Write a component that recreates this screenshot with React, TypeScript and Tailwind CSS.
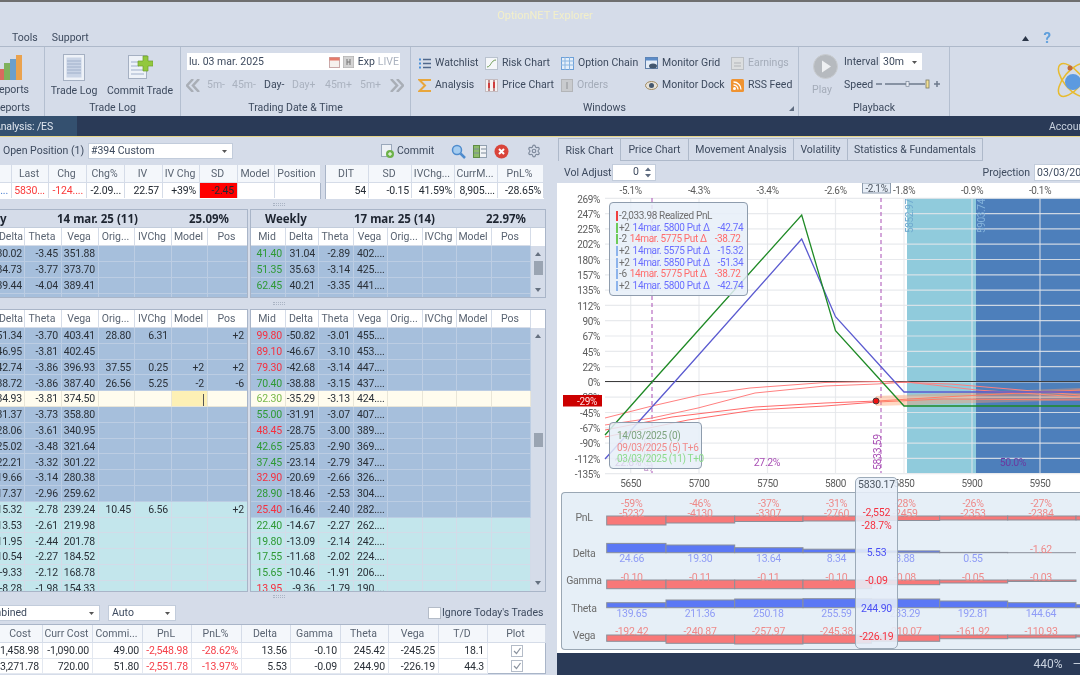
import React from "react";
import { Settings } from "lucide-react";

const TitleBar = () => (
  <div className="h-[26px] bg-[#d5dce9] flex items-center justify-center text-[11px] text-[#f3efc9]">
    <span className="ml-[10px]">OptionNET Explorer</span>
  </div>
);

const MenuBar = () => (
  <div className="h-[18px] bg-[#d5dce9] flex items-center text-[#3d4a5e] pl-[12px] pt-[2px]">
    <span>Tools</span>
    <span className="ml-[14px]">Support</span>
    <div className="ml-auto mr-[29px] flex items-center gap-[15px]">
      <svg width="7" height="5" viewBox="0 0 7 5"><path d="M0 5 L3.5 0 L7 5Z" fill="#2b3648" /></svg>
      <span className="text-[#5f9fdc] text-[15px] font-bold leading-none">?</span>
    </div>
  </div>
);

const Ico = ({ children, w = 13, h = 13, vb }: { children: React.ReactNode; w?: number; h?: number; vb?: string }) => (
  <svg width={w} height={h} viewBox={vb ?? `0 0 ${w} ${h}`} className="shrink-0">{children}</svg>
);

const WinItem = ({ icon, label, dim }: { icon: React.ReactNode; label: string; dim?: boolean }) => (
  <div className={`flex items-center gap-[4px] whitespace-nowrap ${dim ? "text-[#a4acb9]" : "text-[#3d4a5e]"}`}>
    {icon}
    <span>{label}</span>
  </div>
);

const Group = ({ w, label, children, last }: { w: string; label: string; children: React.ReactNode; last?: boolean }) => (
  <div className={`${w} shrink-0 flex flex-col overflow-hidden ${last ? "" : "border-r border-[#b4bfd0]"}`}>
    <div className="flex-1 min-h-0">{children}</div>
    <div className="h-[17px] pt-[2px] flex items-center justify-center text-[#3d4a5e] whitespace-nowrap">{label}</div>
  </div>
);

const Ribbon = () => (
  <div className="h-[70px] bg-[#d5dce9] border-t border-[#aeb9ca] flex">
    <div className="w-[45px] shrink-0 flex flex-col overflow-hidden border-r border-[#b4bfd0]">
      <div className="flex-1 flex flex-col items-end pr-[15px]">
        <svg width="26" height="27" viewBox="0 0 26 27" className="mt-[7px] mr-[5px] shrink-0">
          <rect x="0" y="15" width="6" height="11" fill="#d96a5e" />
          <rect x="6" y="9" width="6" height="17" fill="#7fb15c" />
          <rect x="12" y="5" width="6" height="21" fill="#6c9fcc" />
          <rect x="18" y="1" width="6" height="25" fill="#eaa24e" />
        </svg>
        <span className="text-[#3d4a5e] mt-[4px] whitespace-nowrap">Reports</span>
      </div>
      <div className="h-[17px] pt-[2px] flex items-center justify-end pr-[14px] text-[#3d4a5e] whitespace-nowrap">Reports</div>
    </div>
    <Group w="w-[136px]" label="Trade Log">
      <div className="flex pl-[1px] pt-[7px] text-[#3d4a5e]">
        <div className="w-[56px] flex flex-col items-center">
          <svg width="22" height="27" viewBox="0 0 22 27">
            <rect x="0.5" y="0.5" width="21" height="26" fill="#eef2f8" stroke="#a5b0c2" />
            <rect x="3.5" y="3.5" width="15" height="20" fill="#c9d4e6" />
            <path d="M4 7h14M4 10h14M4 13h14M4 16h14M4 19h14" stroke="#a0b0ca" />
          </svg>
          <span className="mt-[5px] whitespace-nowrap">Trade Log</span>
        </div>
        <div className="w-[70px] ml-[3px] flex flex-col items-center">
          <svg width="25" height="27" viewBox="0 0 25 27">
            <rect x="0.5" y="1.5" width="18" height="23" fill="#eef2f8" stroke="#a5b0c2" />
            <path d="M3 8h13M3 12h8M3 16h13M3 20h13" stroke="#a0b0ca" />
            <path d="M15 2h5v5h5v5h-5v5h-5v-5h-5V7h5z" fill="#92c83e" stroke="#6f9f2d" strokeWidth="0.7" />
          </svg>
          <span className="mt-[5px] whitespace-nowrap">Commit Trade</span>
        </div>
      </div>
    </Group>
    <Group w="w-[230px]" label="Trading Date & Time">
      <div className="pl-[6px] pt-[6px]">
        <div className="w-[213px] h-[17px] pt-[1px] bg-white flex items-center pl-[2px] text-[#3d4a5e]">
          <span>lu. 03 mar. 2025</span>
          <svg width="11" height="11" viewBox="0 0 11 11" className="ml-auto">
            <rect x="0.5" y="0.5" width="10" height="10" fill="#f6f1ee" stroke="#c9a9a9" />
            <rect x="0.5" y="0.5" width="10" height="3" fill="#e57b6a" />
          </svg>
          <svg width="11" height="12" viewBox="0 0 11 12" className="ml-[3px]">
            <rect width="11" height="12" fill="#d3d3d3" stroke="#aaa" />
            <path d="M4 3v6M7 3v6M4 6h3" stroke="#777" />
          </svg>
          <span className="ml-[4px]">Exp</span>
          <span className="ml-[3px] mr-[1px] text-[#aab2bf]">LIVE</span>
        </div>
        <div className="mt-[6px] ml-[-1px] h-[18px] pt-[1px] grid grid-cols-[21px_25px_32px_28px_33px_35px_30px_13px] items-center whitespace-nowrap text-[#aab2bf]">
          <svg width="14" height="13" viewBox="0 0 14 13"><path d="M7 0L1 6.5L7 13M13 0L7 6.5L13 13" fill="none" stroke="#a9aeb6" strokeWidth="2.5" /></svg>
          <span>5m-</span>
          <span>45m-</span>
          <span className="text-[#3d4a5e]">Day-</span>
          <span>Day+</span>
          <span>45m+</span>
          <span>5m+</span>
          <svg width="14" height="13" viewBox="0 0 14 13"><path d="M1 0L7 6.5L1 13M7 0L13 6.5L7 13" fill="none" stroke="#a9aeb6" strokeWidth="2.5" /></svg>
        </div>
      </div>
    </Group>
    <div className="w-[388px] shrink-0 flex flex-col border-r border-[#b4bfd0] overflow-hidden">
      <div className="flex-1 pl-[7px] pt-[5px] grid grid-cols-[67px_76px_84px_86px_1fr] grid-rows-[22px_22px]">
        <WinItem label="Watchlist" icon={<Ico><path d="M5 2.5h8M5 6.5h8M5 10.5h8" stroke="#50688c" strokeWidth="1.3" /><path d="M1 2.5h2M1 6.5h2M1 10.5h2" stroke="#4a90d8" strokeWidth="2" /></Ico>} />
        <WinItem label="Risk Chart" icon={<Ico><rect x="0.5" y="0.5" width="12" height="12" fill="#f5f7fa" stroke="#b9c2ce" /><path d="M2 10C6 10 6 3 11 3" fill="none" stroke="#6c9a52" /></Ico>} />
        <WinItem label="Option Chain" icon={<Ico><rect x="0.5" y="0.5" width="12" height="12" fill="#e5effa" stroke="#6da0d8" /><path d="M0 4h13M0 8h13M4 0v13M8.500 0v13" stroke="#8ab6e2" /></Ico>} />
        <WinItem label="Monitor Grid" icon={<Ico><rect x="0.5" y="0.5" width="12" height="11" fill="#e3ecf7" stroke="#5f7fa8" /><rect x="0.500" y="0.500" width="12" height="3" fill="#5c8cc8" /><ellipse cx="8" cy="9" rx="4" ry="2.5" fill="#44586f" /></Ico>} />
        <WinItem dim label="Earnings" icon={<Ico><rect x="0.5" y="0.5" width="12" height="12" fill="#dcdedf" stroke="#bbbfc4" /><path d="M3 6h7M3 9h7" stroke="#b2b5b9" /></Ico>} />
        <WinItem label="Analysis" icon={<Ico><path d="M12 2V1H1.500L7 6.500L1.500 12H12v-1" fill="none" stroke="#e8a63c" strokeWidth="2" /></Ico>} />
        <WinItem label="Price Chart" icon={<Ico><rect x="0.5" y="0.5" width="12" height="12" fill="#f6f2f2" stroke="#c5bcc0" /><path d="M4 1v11M9 1v11" stroke="#8b2e2e" /><rect x="3" y="4" width="2" height="5" fill="#cf3d3d" /><rect x="8" y="3" width="2" height="6" fill="#cf3d3d" /></Ico>} />
        <WinItem dim label="Orders" icon={<Ico w={12}><rect x="0.5" y="0.5" width="11" height="12" fill="#c9cbce" stroke="#b3b5b8" /><path d="M6 3v7" stroke="#8f9296" /></Ico>} />
        <WinItem label="Monitor Dock" icon={<Ico><ellipse cx="6.5" cy="6.5" rx="6" ry="4" fill="#e7e2d8" stroke="#a08a60" /><circle cx="6.500" cy="6.500" r="2.500" fill="#44586f" /></Ico>} />
        <WinItem label="RSS Feed" icon={<Ico><rect width="13" height="13" rx="1.500" fill="#ef9331" /><circle cx="3.500" cy="9.500" r="1.500" fill="#fff" /><path d="M2.500 6a4.500 4.500 0 0 1 4.500 4.500M2.500 3a7.500 7.500 0 0 1 7.500 7.500" fill="none" stroke="#fff" strokeWidth="1.300" /></Ico>} />
      </div>
      <div className="h-[17px] pt-[2px] flex items-center text-[#3d4a5e] relative">
        <span className="ml-[172px]">Windows</span>
        <svg width="5" height="5" viewBox="0 0 5 5" className="ml-auto mr-[4px]"><path d="M5 0V5H0Z" fill="#5f6c80" /></svg>
      </div>
    </div>
    <Group w="w-[151px]" label="Playback">
      <div className="flex pl-[8px] pt-[7px] text-[#3d4a5e]">
        <div className="w-[37px] flex flex-col items-center">
          <svg width="25" height="25" viewBox="0 0 25 25">
            <circle cx="12.500" cy="12.500" r="12" fill="#b6babf" stroke="#c9ccd0" />
            <path d="M9 6.500L18 12.500L9 18.500Z" fill="#eef0f2" />
          </svg>
          <span className="mt-[6px] ml-[-7px] text-[#a4acb9]">Play</span>
        </div>
        <div className="-mt-[1px]">
          <div className="flex items-center h-[17px]">
            <span className="w-[36px] pt-[2px]">Interval</span>
            <div className="w-[42px] h-[17px] pt-[1px] bg-white flex items-center pl-[3px]">
              <span>30m</span>
              <svg width="5" height="3" viewBox="0 0 5 3" className="ml-auto mr-[5px]"><path d="M0 0H5L2.500 3Z" fill="#555" /></svg>
            </div>
          </div>
          <div className="flex items-center mt-[5px] h-[17px]">
            <span className="w-[31px] pt-[3px]">Speed</span>
            <svg width="65" height="10" viewBox="0 0 65 10">
              <path d="M1 5h6M10 5h40" stroke="#6d7a8c" strokeWidth="1.500" />
              <rect x="31" y="2.500" width="3" height="5" fill="#e8ecf2" stroke="#6d7a8c" strokeWidth="0.600" />
              <rect x="51" y="1" width="3" height="8" fill="#f3df92" stroke="#7c7a60" strokeWidth="0.800" />
              <path d="M59 5h6M62 2v6" stroke="#6d7a8c" strokeWidth="1.500" />
            </svg>
          </div>
        </div>
      </div>
    </Group>
    <div className="flex-1 overflow-hidden flex justify-end items-start pt-[13px]">
      <svg width="25" height="42" viewBox="0 0 25 42" className="shrink-0">
        <ellipse cx="18" cy="20" rx="20" ry="9" transform="rotate(-50 18 20)" fill="none" stroke="#e7bb2f" strokeWidth="1.500" />
        <ellipse cx="18" cy="20" rx="20" ry="9" transform="rotate(50 18 20)" fill="none" stroke="#e7bb2f" strokeWidth="1.500" />
        <circle cx="18" cy="22" r="8" fill="#5c9ae0" />
        <circle cx="15" cy="8" r="2.500" fill="#c2693b" />
      </svg>
    </div>
  </div>
);

const NavBar = () => (
  <div className="h-[21px] bg-[#2a3a57] border-b-[1.500px] border-[#e6d487] flex text-[#dfe5ee] shrink-0">
    <div className="w-[77px] pt-[2px] bg-[#34506f] flex items-center justify-end pr-[24px] tracking-[-0.15px] whitespace-nowrap overflow-hidden">Analysis: /ES</div>
    <div className="ml-auto pt-[2px] w-[31px] flex items-center overflow-hidden whitespace-nowrap text-[#c9d2df]">Account</div>
  </div>
);

const Cell = ({ c = "", j = "end", children }: { c?: string; j?: "end" | "center"; children?: React.ReactNode }) => (
  <div className={`flex items-center overflow-hidden whitespace-nowrap pr-[3px] pt-[2px] ${j === "end" ? "justify-end tracking-[-0.15px]" : "justify-center pl-[1px]"} ${c}`}>{children}</div>
);

const PositionBar = () => (
  <div className="h-[28px] flex items-center text-[#3d4a5e] pl-[3px] whitespace-nowrap">
    <span className="w-[85px]">Open Position (1)</span>
    <div className="w-[145px] h-[16px] bg-white border border-[#c2ccdb] flex items-center pl-[2px]">
      <span>#394 Custom</span>
      <svg width="5" height="3" viewBox="0 0 5 3" className="ml-auto mr-[5px]"><path d="M0 0H5L2.500 3Z" fill="#555" /></svg>
    </div>
    <svg width="13" height="14" viewBox="0 0 13 14" className="ml-[148px]">
      <rect x="0.500" y="0.500" width="10" height="12" fill="#edf1f6" stroke="#9aa8bb" />
      <circle cx="9" cy="10" r="4" fill="#6db24a" />
      <path d="M7 10h4M9 8v4" stroke="#fff" />
    </svg>
    <span className="ml-[3px] w-[36px]">Commit</span>
    <svg width="15" height="15" viewBox="0 0 15 15" className="ml-[18px]">
      <circle cx="6" cy="6" r="4.500" fill="#a6cdf0" stroke="#4f8ccd" strokeWidth="1.500" />
      <path d="M9.500 9.500L14 14" stroke="#4f8ccd" strokeWidth="2.500" />
    </svg>
    <svg width="14" height="13" viewBox="0 0 14 13" className="ml-[7px]">
      <rect x="0.500" y="0.500" width="13" height="12" fill="#f1f3f6" stroke="#92a0b0" />
      <rect x="0.500" y="0.500" width="6" height="12" fill="#8dbb6a" stroke="#5f8c45" />
      <path d="M1 4h5M1 8h5M8 4h5M8 8h5" stroke="#7d8b9b" />
    </svg>
    <svg width="15" height="15" viewBox="0 0 15 15" className="ml-[7px]">
      <circle cx="7.500" cy="7.500" r="7" fill="#d9443a" />
      <path d="M5 5l5 5M10 5l-5 5" stroke="#fff" strokeWidth="2" />
    </svg>
    <Settings size={14} className="ml-[18px] text-[#7e8a9c]" />
  </div>
);

const sumH = ["", "Last", "Chg", "Chg%", "IV", "IV Chg", "SD", "Model", "Position"];
const Summary = () => (
  <div className="h-[34px] flex">
    <div className="w-[321px] border-r border-[#a9b5c8] bg-white text-[#232a33]">
      <div className="h-[18px] grid grid-cols-[12px_37px_38px_38px_38px_37px_38px_37px_46px] bg-[#f4f7fb] text-[#5a6472]">
        {sumH.map((h, i) => <Cell key={i} j="center" c="border-r border-b border-[#d5dce8]">{h}</Cell>)}
      </div>
      <div className="h-[15px] grid grid-cols-[12px_37px_38px_38px_38px_37px_38px_37px_46px]">
        <Cell c="border-r border-[#d5dce8] text-[#4a7fd0]">9...</Cell>
        <Cell c="border-r border-[#d5dce8] text-[#fa3a3a]">5830...</Cell>
        <Cell c="border-r border-[#d5dce8] text-[#fa3a3a]">-124....</Cell>
        <Cell c="border-r border-[#d5dce8]">-2.09...</Cell>
        <Cell c="border-r border-[#d5dce8]">22.57</Cell>
        <Cell c="border-r border-[#d5dce8]">+39%</Cell>
        <Cell c="border-r border-[#d5dce8] bg-[#ff0000]">-2.45</Cell>
        <Cell c="border-r border-[#d5dce8]" />
        <Cell />
      </div>
    </div>
    <div className="w-[219px] ml-[4px] bg-white text-[#232a33] border-l border-[#a9b5c8]">
      <div className="h-[18px] grid grid-cols-[43px_43px_43px_43px_1fr] bg-[#f4f7fb] text-[#5a6472]">
        {["DIT", "SD", "IVChg...", "CurrM...", "PnL%"].map((h) => <Cell key={h} j="center" c="border-r border-b border-[#d5dce8]">{h}</Cell>)}
      </div>
      <div className="h-[15px] grid grid-cols-[43px_43px_43px_43px_1fr]">
        {["54", "-0.15", "41.59%", "8,905....", "-28.65%"].map((h) => <Cell key={h} c="border-r border-[#d5dce8] !pr-[2px]">{h}</Cell>)}
      </div>
    </div>
  </div>
);

const Grip = ({ h, c = "" }: { h: string; c?: string }) => (
  <div className={`${h} flex items-center justify-center ${c}`}>
    <div className="w-[12px] h-[3px] border-y border-dotted border-[#aab4c4]" />
  </div>
);

const leftCols = "grid-cols-[25px_37px_37px_36px_37px_36px_40px]";
const rightCols = "grid-cols-[35px_33px_35px_34px_35px_34px_35px_39px]";
const lh = ["Delta", "Theta", "Vega", "Orig...", "IVChg", "Model", "Pos"];
const rh = ["Mid", "Delta", "Theta", "Vega", "Orig...", "IVChg", "Model", "Pos"];

type L = [string, string, string, string?, string?, string?, string?];
const l1: L[] = [["30.02", "-3.45", "351.88"], ["34.73", "-3.77", "373.70"], ["39.44", "-4.04", "389.41"], ["44.19", "-4.27", "399.88"]];
const r1: [string, string, string, string][] = [["41.40", "31.04", "-2.89", "402...."], ["51.35", "35.63", "-3.14", "425...."], ["62.45", "40.21", "-3.35", "441...."], ["74.70", "44.79", "-3.50", "451...."]];
const l2: L[] = [
  ["-51.34", "-3.70", "403.41", "28.80", "6.31", "", "+2"],
  ["-46.95", "-3.81", "402.45"],
  ["-42.74", "-3.86", "396.93", "37.55", "0.25", "+2", "+2"],
  ["-38.72", "-3.86", "387.40", "26.56", "5.25", "-2", "-6"],
  ["-34.93", "-3.81", "374.50"],
  ["-31.37", "-3.73", "358.80"],
  ["-28.06", "-3.61", "340.95"],
  ["-25.02", "-3.48", "321.64"],
  ["-22.21", "-3.32", "301.22"],
  ["-19.66", "-3.14", "280.38"],
  ["-17.37", "-2.96", "259.62"],
  ["-15.32", "-2.78", "239.24", "10.45", "6.56", "", "+2"],
  ["-13.53", "-2.61", "219.98"],
  ["-11.95", "-2.44", "201.78"],
  ["-10.54", "-2.27", "184.52"],
  ["-9.33", "-2.12", "168.78"],
  ["-8.28", "-1.98", "154.33"],
];
const r2: [string, string, string, string, string][] = [
  ["99.80", "-50.82", "-3.01", "455....", "r"],
  ["89.10", "-46.67", "-3.10", "453....", "r"],
  ["79.30", "-42.68", "-3.14", "447....", "r"],
  ["70.40", "-38.88", "-3.15", "437....", "g"],
  ["62.30", "-35.29", "-3.13", "424....", "l"],
  ["55.00", "-31.91", "-3.07", "407....", "g"],
  ["48.45", "-28.75", "-3.00", "389....", "r"],
  ["42.65", "-25.83", "-2.90", "369....", "g"],
  ["37.45", "-23.14", "-2.79", "347....", "g"],
  ["32.90", "-20.69", "-2.66", "326....", "r"],
  ["28.90", "-18.46", "-2.53", "304....", "g"],
  ["25.40", "-16.46", "-2.40", "282....", "r"],
  ["22.40", "-14.67", "-2.27", "262....", "g"],
  ["19.80", "-13.09", "-2.14", "242....", "g"],
  ["17.55", "-11.68", "-2.02", "224....", "g"],
  ["15.65", "-10.46", "-1.91", "206....", "g"],
  ["13.95", "-9.36", "-1.79", "190....", "r"],
];

const rowBg = (i: number, tealFrom: number) =>
  i === 4 ? "bg-[#fffcee] border-[#e9e6d8]" : i >= tealFrom ? "bg-[#c3e6ec] border-[#d3dbe8]" : "bg-[#a6bfdc] border-[#bccde3]";
const midColor: Record<string, string> = { r: "text-[#f5303f]", g: "text-[#2f9a35]", l: "text-[#79b84a]" };

const LeftRows = ({ rows, h, tealFrom = 99, sel }: { rows: L[]; h: string; tealFrom?: number; sel?: boolean }) => (
  <>
    {rows.map((r, i) => (
      <div key={i} className={`${h} grid ${leftCols} text-[#2a3038] ${rowBg(i, tealFrom)}`}>
        {[0, 1, 2, 3, 4, 5, 6].map((k) => (
          <Cell key={k} c={`border-r border-b ${k === 0 ? "!pr-[2px]" : ""} ${rowBg(i, tealFrom)} ${sel && i === 4 && k === 5 ? "!bg-[#fdf0b5]" : ""}`}>
            {sel && i === 4 && k === 5 ? <div className="w-[1px] h-[12px] bg-[#555]" /> : r[k] ?? ""}
          </Cell>
        ))}
      </div>
    ))}
  </>
);

const RightRows = ({ rows, h, tealFrom = 99, mid }: { rows: string[][]; h: string; tealFrom?: number; mid: (r: string[]) => string }) => (
  <>
    {rows.map((r, i) => (
      <div key={i} className={`${h} grid ${rightCols} text-[#2a3038]`}>
        {[0, 1, 2, 3, 4, 5, 6, 7].map((k) => (
          <Cell key={k} c={`border-r border-b ${rowBg(i, tealFrom)} ${k === 0 ? mid(r) : ""} ${k === 3 ? "!justify-start !pl-[3px]" : ""}`}>{k < 4 ? r[k] : ""}</Cell>
        ))}
      </div>
    ))}
  </>
);

const ChainHead = ({ cols, names }: { cols: string; names: string[] }) => (
  <div className={`h-[18px] grid ${cols} bg-white text-[#5a6472]`}>
    {names.map((n) => <Cell key={n} j="center" c="border-r border-b border-[#d5dce8]">{n}</Cell>)}
  </div>
);

const Scroll = ({ thumb }: { thumb: string }) => (
  <div className="w-[14px] shrink-0 bg-[#d5dce9] relative flex flex-col items-center">
    <svg width="6" height="4" viewBox="0 0 6 4" className="mt-[6px]"><path d="M0 4L3 0L6 4Z" fill="#65707f" /></svg>
    <div className={`w-[9px] bg-[#9aa4b2] ${thumb}`} />
    <svg width="6" height="4" viewBox="0 0 6 4" className="mt-auto mb-[6px]"><path d="M0 0L3 4L6 0Z" fill="#65707f" /></svg>
  </div>
);

const Chains = () => (
  <>
    <Grip h="h-[10px]" />
    <div className="h-[89px] flex">
      <div className="w-[248px] border-r border-b border-t border-[#a9b5c8] overflow-hidden">
        <div className="h-[18px] pt-[1px] bg-[#d5dce9] border-b border-[#c2ccdb] flex items-center font-bold font-['Noto_Sans'] text-[11.500px] text-[#1d2430] whitespace-nowrap">
          <span className="w-[57px]">y</span>
          <span className="w-[132px]">14 mar. 25 (11)</span>
          <span>25.09%</span>
        </div>
        <ChainHead cols={leftCols} names={lh} />
        <LeftRows rows={l1} h="h-[16px]" />
      </div>
      <div className="w-[296px] ml-[2px] border border-[#a9b5c8] overflow-hidden">
        <div className="h-[18px] pt-[1px] bg-[#d5dce9] border-b border-[#c2ccdb] flex items-center font-bold font-['Noto_Sans'] text-[11.500px] text-[#1d2430] whitespace-nowrap pl-[14px]">
          <span className="w-[89px]">Weekly</span>
          <span className="w-[132px]">17 mar. 25 (14)</span>
          <span>22.97%</span>
        </div>
        <div className="flex">
          <div className="w-[280px] shrink-0 overflow-hidden">
            <ChainHead cols={rightCols} names={rh} />
            <RightRows rows={r1} h="h-[16px]" mid={() => "text-[#2f9a35]"} />
          </div>
          <div className="flex-1 flex flex-col min-h-0 h-[70px]">
            <div className="h-[18px] bg-white shrink-0" />
            <div className="flex-1 flex min-h-0"><Scroll thumb="h-[14px] mt-[5px]" /></div>
          </div>
        </div>
      </div>
    </div>
    <Grip h="h-[11px]" />
    <div className="h-[283px] flex">
      <div className="w-[248px] border-r border-b border-t border-[#a9b5c8] overflow-hidden">
        <ChainHead cols={leftCols} names={lh} />
        <LeftRows rows={l2} h="h-[15.800px]" tealFrom={11} sel />
      </div>
      <div className="w-[296px] ml-[2px] border border-[#a9b5c8] overflow-hidden flex">
        <div className="w-[280px] shrink-0 overflow-hidden">
          <ChainHead cols={rightCols} names={rh} />
          <RightRows rows={r2} h="h-[15.800px]" tealFrom={12} mid={(r) => midColor[r[4]]} />
        </div>
        <div className="flex-1 flex flex-col min-h-0">
          <div className="h-[18px] bg-white shrink-0" />
          <div className="flex-1 flex min-h-0"><Scroll thumb="h-[14px] mt-[95px]" /></div>
        </div>
      </div>
    </div>
    <Grip h="h-[9px]" />
  </>
);

const botCols = "grid-cols-[43px_50px_50px_49px_50px_49px_50px_48px_50px_49px_58px]";
const botH = ["Cost", "Curr Cost", "Commi...", "PnL", "PnL%", "Delta", "Gamma", "Theta", "Vega", "T/D", "Plot"];
const botR = [
  ["-1,458.98", "-1,090.00", "49.00", "-2,548.98", "-28.62%", "13.56", "-0.10", "245.42", "-245.25", "18.1"],
  ["-3,271.78", "720.00", "51.80", "-2,551.78", "-13.97%", "5.53", "-0.09", "244.90", "-226.19", "44.3"],
];
const Check = () => (
  <svg width="12" height="12" viewBox="0 0 12 12">
    <rect x="0.500" y="0.500" width="11" height="11" fill="#fff" stroke="#b4bcc8" />
    <path d="M3 6L5.500 8.500L9.500 3" fill="none" stroke="#8a929e" strokeWidth="1.200" />
  </svg>
);
const Bottom = () => (
  <>
    <div className="h-[23px] flex items-center text-[#3d4a5e] whitespace-nowrap">
      <div className="w-[100px] h-[16px] pt-[1px] bg-white border-r border-y border-[#c2ccdb] flex items-center justify-end overflow-hidden">
        <span className="mr-[4px]">Combined</span>
        <svg width="5" height="3" viewBox="0 0 5 3" className="ml-[58px] mr-[5px] shrink-0"><path d="M0 0H5L2.500 3Z" fill="#555" /></svg>
      </div>
      <div className="w-[68px] h-[16px] pt-[1px] ml-[8px] bg-white border border-[#c2ccdb] flex items-center pl-[3px]">
        <span>Auto</span>
        <svg width="5" height="3" viewBox="0 0 5 3" className="ml-auto mr-[5px]"><path d="M0 0H5L2.500 3Z" fill="#555" /></svg>
      </div>
      <div className="ml-[252px] w-[13px] h-[12px] bg-white border border-[#b4bcc8] mr-[1px]" />
      <span className="pt-[2px]">Ignore Today's Trades</span>
    </div>
    <div className="w-[546px] h-[50px] border-t border-b border-r border-[#a9b5c8] bg-white">
      <div className={`h-[18px] grid ${botCols} bg-[#f4f7fb] text-[#5a6472]`}>
        {botH.map((h) => <Cell key={h} j="center" c="border-r border-b border-[#d5dce8]">{h}</Cell>)}
      </div>
      {botR.map((r, i) => (
        <div key={i} className={`h-[15.500px] grid ${botCols} text-[#2a3038]`}>
          {r.map((v, k) => <Cell key={k} c={`border-r border-b border-[#e3e8f0] ${k === 3 || k === 4 ? "text-[#f5404a]" : ""}`}>{v}</Cell>)}
          <div className="flex items-center justify-center"><Check /></div>
        </div>
      ))}
    </div>
  </>
);

const yLabels = ["269%", "247%", "225%", "202%", "180%", "157%", "135%", "112%", "90%", "67%", "45%", "22%", "0%", "-22%", "-45%", "-67%", "-90%", "-112%", "-135%"];
const xs = [630.7, 699, 767.5, 835.5, 904, 972, 1040];
const strikes = [5650, 5700, 5750, 5800, 5850, 5900, 5950];
const topPct = ["-5.1%", "-4.3%", "-3.4%", "-2.6%", "-1.8%", "-0.9%", "-0.1%"];
const yAt = (i: number) => 198.3 + i * 15.3;

const Chart = () => (
  <svg width="523" height="308" viewBox="557 183 523 308" className="block font-['Roboto'] tracking-[-0.35px]">
    <rect x="907" y="198" width="69" height="275" fill="#90cbdc" />
    <rect x="976" y="198" width="104" height="275" fill="#4d7fbb" />
    <rect x="904" y="198" width="3" height="275" fill="#ffffff" />
    {yLabels.map((_, i) => <line key={i} x1="605" x2="1080" y1={yAt(i)} y2={yAt(i)} stroke="#e4e6ea" strokeOpacity="0.85" strokeWidth="1.200" />)}
    {xs.map((x) => <line key={x} x1={x} x2={x} y1="198" y2="473" stroke="#e4e6ea" strokeOpacity="0.8" strokeWidth="1.200" />)}
    {yLabels.map((t, i) => <text key={t} x="600" y={yAt(i) + 4.200} textAnchor="end" fontSize="10" fill="#5c5c5c">{t}</text>)}
    {strikes.map((s, i) => <text key={s} x={xs[i]} y="487" textAnchor="middle" fontSize="10" fill="#5c5c5c">{s}</text>)}
    {topPct.map((s, i) => <text key={s} x={xs[i]} y="194" textAnchor="middle" fontSize="10" fill="#5c5c5c">{s}</text>)}
    <rect x="862.500" y="183" width="28" height="10" fill="#e7eef7" stroke="#8c9bad" />
    <text x="876.500" y="192" textAnchor="middle" fontSize="10" fill="#4c5560">-2.1%</text>
    <line x1="652" x2="652" y1="198" y2="473" stroke="#a94fb5" strokeDasharray="4 3" />
    <line x1="881" x2="881" y1="198" y2="473" stroke="#a94fb5" strokeDasharray="4 3" />
    <line x1="605" x2="1080" y1="381.500" y2="381.500" stroke="#3d3d3d" />
    <polyline fill="none" stroke="#ff8080" strokeWidth="1" points="605,418 652,406 700,395 750,388 825,382.500 880,381.500 950,384 1080,395" />
    <polyline fill="none" stroke="#ff8080" strokeWidth="1" points="605,425 652,418 698,408 755,393 825,386 877,384 907,382 977,390 1080,397" />
    <polyline fill="none" stroke="#ff6a6a" strokeWidth="1" points="605,430 672,417 755,407 825,403 877,401 943,397 1080,390" />
    <polyline fill="none" stroke="#ff6a6a" strokeWidth="1" points="605,437 688,420 755,410 825,406 877,402 943,399 1080,400" />
    <path d="M876 396 L1080 388 V400 L876 406Z" fill="#ff9a66" fillOpacity="0.4" />
    <polyline fill="none" stroke="#5b5bd0" strokeWidth="1.300" points="605,459 675,381.500 801.700,239 835.500,316.700 904,392 1080,392" />
    <polyline fill="none" stroke="#1f8a26" strokeWidth="1.300" points="605,435 652,382 801.700,215 835.500,330.700 904,406 1080,406" />
    <circle cx="876" cy="401" r="3" fill="#ee1111" stroke="#4a3a3a" />
    <rect x="563" y="395" width="39" height="11.500" fill="#cc0000" />
    <text x="597" y="404.500" textAnchor="end" fontSize="10" fill="#ffdede">-29%</text>
    <text transform="translate(881,470) rotate(-90)" fontSize="10.500" fill="#a94fb5">5833.59</text>
    <text transform="translate(913,233) rotate(-90)" fontSize="10" fill="#6fa9cf">5852.97</text>
    <text transform="translate(985,233) rotate(-90)" fontSize="10" fill="#86b5dc">5903.74</text>
    <text transform="translate(652,472) rotate(-90)" fontSize="10" fill="#c6a0cf">5665.12</text>
    <text x="628" y="466" textAnchor="middle" fontSize="10.500" fill="#8a2f9a">22.8%</text>
    <text x="767" y="466" textAnchor="middle" fontSize="10.500" fill="#a94fb5">27.2%</text>
    <text x="1013" y="466" textAnchor="middle" fontSize="10.500" fill="#6a3aa0">50.0%</text>
  </svg>
);

const lg = [
  ["bg-[#6ecb5a]", "+2", "14mar. 5800 Put Δ", "-42.74", "b"],
  ["bg-[#6ecb5a]", "-2", "14mar. 5775 Put Δ", "-38.72", "r"],
  ["bg-[#8db4ec]", "+2", "14mar. 5575 Put Δ", "-15.32", "b"],
  ["bg-[#8db4ec]", "+2", "14mar. 5850 Put Δ", "-51.34", "b"],
  ["bg-[#8db4ec]", "-6", "14mar. 5775 Put Δ", "-38.72", "r"],
  ["bg-[#8db4ec]", "+2", "14mar. 5800 Put Δ", "-42.74", "b"],
];

const Legend = () => (
  <div className="absolute left-[52px] top-[65px] w-[139px] h-[94px] bg-[#e6eef8]/85 border border-[#8e9cad] rounded-[4px] pt-[7px] pl-[6px] text-[10px] font-['Roboto'] tracking-[-0.35px] leading-[11.700px] whitespace-nowrap">
    <div className="flex items-center h-[11.700px] text-[#6f6f6f]">
      <span className="w-[2px] h-[10px] bg-[#f04040] mr-[1px]" />
      <span>-2,033.98 Realized PnL</span>
    </div>
    {lg.map((r, i) => (
      <div key={i} className={`flex items-center h-[11.700px] ${r[4] === "b" ? "text-[#6a6eff]" : "text-[#ff6b6b]"}`}>
        <span className={`w-[2px] h-[10px] ${r[0]} mr-[1px] shrink-0`} />
        <span className="text-[#6f6f6f] mr-[3px]">{r[1]}</span>
        <span>{r[2]}</span>
        <span className="ml-[8px]">{r[3]}</span>
      </div>
    ))}
  </div>
);

const Legend2 = () => (
  <div className="absolute left-[52px] top-[285px] w-[93px] h-[47px] bg-[#e6eef8]/85 border border-[#8e9cad] rounded-[4px] pt-[7px] pl-[7px] text-[10px] font-['Roboto'] tracking-[-0.35px] leading-[11.700px] whitespace-nowrap">
    <div className="text-[#7ea37e]">14/03/2025 (0)</div>
    <div className="text-[#f08a8a]">09/03/2025 (5) T+6</div>
    <div className="text-[#8edb8e]">03/03/2025 (11) T+0</div>
  </div>
);

const cols = [605.7, 665, 733.7, 802, 870.6, 938.7, 1006.7, 1075, 1082];
const Bars = ({ top, ys, red }: { top: boolean; ys: [number, number[]]; red: boolean }) => (
  <>
    {ys[1].map((h, i) => (
      <rect key={i} x={cols[i]} y={top ? ys[0] : ys[0] - h} width={cols[i + 1] - cols[i]} height={h} fill={red ? "#f87878" : "#5b78f5"} stroke="#8a8f9a" />
    ))}
  </>
);

const Lbl = ({ y, vals, red }: { y: number; vals: string[]; red: boolean }) => (
  <>
    {vals.map((v, i) => <text key={i} x={xs[i]} y={y} textAnchor="middle" fontSize="10.500" fill={red ? "#ee8a8a" : "#8f9cf6"}>{v}</text>)}
  </>
);

const BottomChart = () => (
  <div className="h-[162px] bg-white pl-[4px] pt-[1px]">
    <div className="h-[158px] bg-[#e6eff7] border border-r-0 border-[#9aa7b4] rounded-l-[4px] overflow-hidden">
      <svg width="519" height="158" viewBox="561 492 519 158" className="block font-['Roboto'] tracking-[-0.3px]">
        <text x="583" y="520" textAnchor="middle" fontSize="10.500" fill="#6d6d6d">PnL</text>
        <text x="583" y="556" textAnchor="middle" fontSize="10.500" fill="#6d6d6d">Delta</text>
        <text x="583" y="583" textAnchor="middle" fontSize="10.500" fill="#6d6d6d">Gamma</text>
        <text x="583" y="611" textAnchor="middle" fontSize="10.500" fill="#6d6d6d">Theta</text>
        <text x="583" y="638" textAnchor="middle" fontSize="10.500" fill="#6d6d6d">Vega</text>
        <Bars top red ys={[515, [9, 7, 5.500, 5, 4.500, 4, 4, 4]]} />
        <Bars top={false} red={false} ys={[551.700, [9.300, 7.700, 5, 3.500, 1.800, 0.300]]} />
        <line x1="1006" x2="1075" y1="551.700" y2="551.700" stroke="#8a8f9a" />
        <Bars top red ys={[579, [8.700, 8.700, 8.700, 8.700, 4.700, 3, 1.500]]} />
        <Bars top={false} red={false} ys={[606.700, [5, 7.700, 8.700, 9, 8.700, 6.700, 5, 3]]} />
        <Bars top red ys={[634, [6.300, 8.300, 9, 8.300, 6.300, 3.700, 3, 2]]} />
        <Lbl y={505.500} red vals={["-59%", "-46%", "-37%", "-31%", "-28%", "-26%", "-27%"]} />
        <Lbl y={515.500} red vals={["-5232", "-4130", "-3307", "-2760", "-2459", "-2353", "-2384"]} />
        <Lbl y={561} red={false} vals={["24.66", "19.30", "13.64", "8.34", "3.88", "0.55", ""]} />
        <text x="1040" y="552" textAnchor="middle" fontSize="10.500" fill="#ee8a8a">-1.62</text>
        <Lbl y={580} red vals={["-0.10", "-0.11", "-0.11", "-0.10", "-0.08", "-0.05", "-0.03"]} />
        <Lbl y={616} red={false} vals={["139.65", "211.36", "250.18", "255.59", "233.29", "192.81", "144.64"]} />
        <Lbl y={634} red vals={["-192.42", "-240.87", "-257.97", "-245.38", "-210.07", "-161.92", "-110.93"]} />
      </svg>
    </div>
  </div>
);

const Tooltip = () => (
  <div className="absolute left-[298px] top-[340px] w-[43px] h-[172px] rounded-[5px] border-[1.500px] border-[#9dabb9] bg-[#e6eef8]/88 font-['Roboto'] text-[10.500px] tracking-[-0.2px] flex flex-col items-center whitespace-nowrap">
    <div className="h-[13px] leading-[13px] text-[#4c5560]">5830.17</div>
    <div className="mt-[15px] leading-[13px] text-[#f5303f]">-2,552</div>
    <div className="leading-[13px] text-[#f5303f]">-28.7%</div>
    <div className="mt-[14px] leading-[13px] text-[#4a4ff5]">5.53</div>
    <div className="mt-[14.500px] leading-[13px] text-[#f5303f]">-0.09</div>
    <div className="mt-[15px] leading-[13px] text-[#4a4ff5]">244.90</div>
    <div className="mt-[15px] leading-[13px] text-[#f5303f]">-226.19</div>
  </div>
);

const RightPane = () => (
  <div className="w-[523px] shrink-0 relative bg-white overflow-hidden">
    <div className="h-[24px] bg-[#d5dce9] flex items-end pl-[1px] text-[#3d4a5e] whitespace-nowrap">
      <div className="w-[63px] h-[23px] pt-[2px] border border-b-0 border-[#aeb9ca] flex items-center justify-center">Risk Chart</div>
      {[["w-[68px]", "Price Chart"], ["w-[105px]", "Movement Analysis"], ["w-[54px]", "Volatility"], ["w-[135px]", "Statistics & Fundamentals"]].map(([w, t]) => (
        <div key={t} className={`${w} h-[23px] pt-[2px] border-t border-r border-b border-[#aeb9ca] flex items-center justify-center`}>{t}</div>
      ))}
    </div>
    <div className="h-[22px] bg-[#d5dce9] flex items-center text-[#3d4a5e] whitespace-nowrap pl-[7px]">
      <span className="w-[48px] pt-[2px]">Vol Adjust</span>
      <div className="w-[44px] h-[17px] pt-[1px] bg-white border border-[#c2ccdb] flex items-center justify-end">
        <span className="mr-[6px]">0</span>
        <svg width="6" height="11" viewBox="0 0 6 11" className="mr-[4px]"><path d="M0 4L3 0.500L6 4ZM0 7L3 10.500L6 7Z" fill="#5f6c80" /></svg>
      </div>
      <span className="ml-auto mr-[4px] pt-[2px]">Projection</span>
      <div className="w-[46px] h-[17px] bg-white border-l border-y border-[#c2ccdb] pl-[2px] leading-[16px] overflow-hidden">03/03/2025</div>
    </div>
    <Chart />
    <Legend />
    <Legend2 />
    <BottomChart />
    <div className="h-[22px] bg-[#2a3a57] flex items-center justify-end text-[#c9d2df] text-[12px] overflow-hidden whitespace-nowrap">
      <span>440%</span>
      <span className="ml-[10px] mr-[-2px]">—</span>
    </div>
    <Tooltip />
  </div>
);

export default function App() {
  return (
    <div className="w-[1080px] h-[675px] overflow-hidden bg-[#d5dce9] font-['Roboto',sans-serif] text-[10.500px] leading-none [filter:blur(0.4px)]">
      <div className="h-[2px] bg-[#6f6f6f]" />
      <TitleBar />
      <MenuBar />
      <Ribbon />
      <NavBar />
      <div className="flex h-[538px]">
        <div className="w-[557px] shrink-0 overflow-hidden">
          <PositionBar />
          <Summary />
          <Chains />
          <Bottom />
        </div>
        <RightPane />
      </div>
    </div>
  );
}
